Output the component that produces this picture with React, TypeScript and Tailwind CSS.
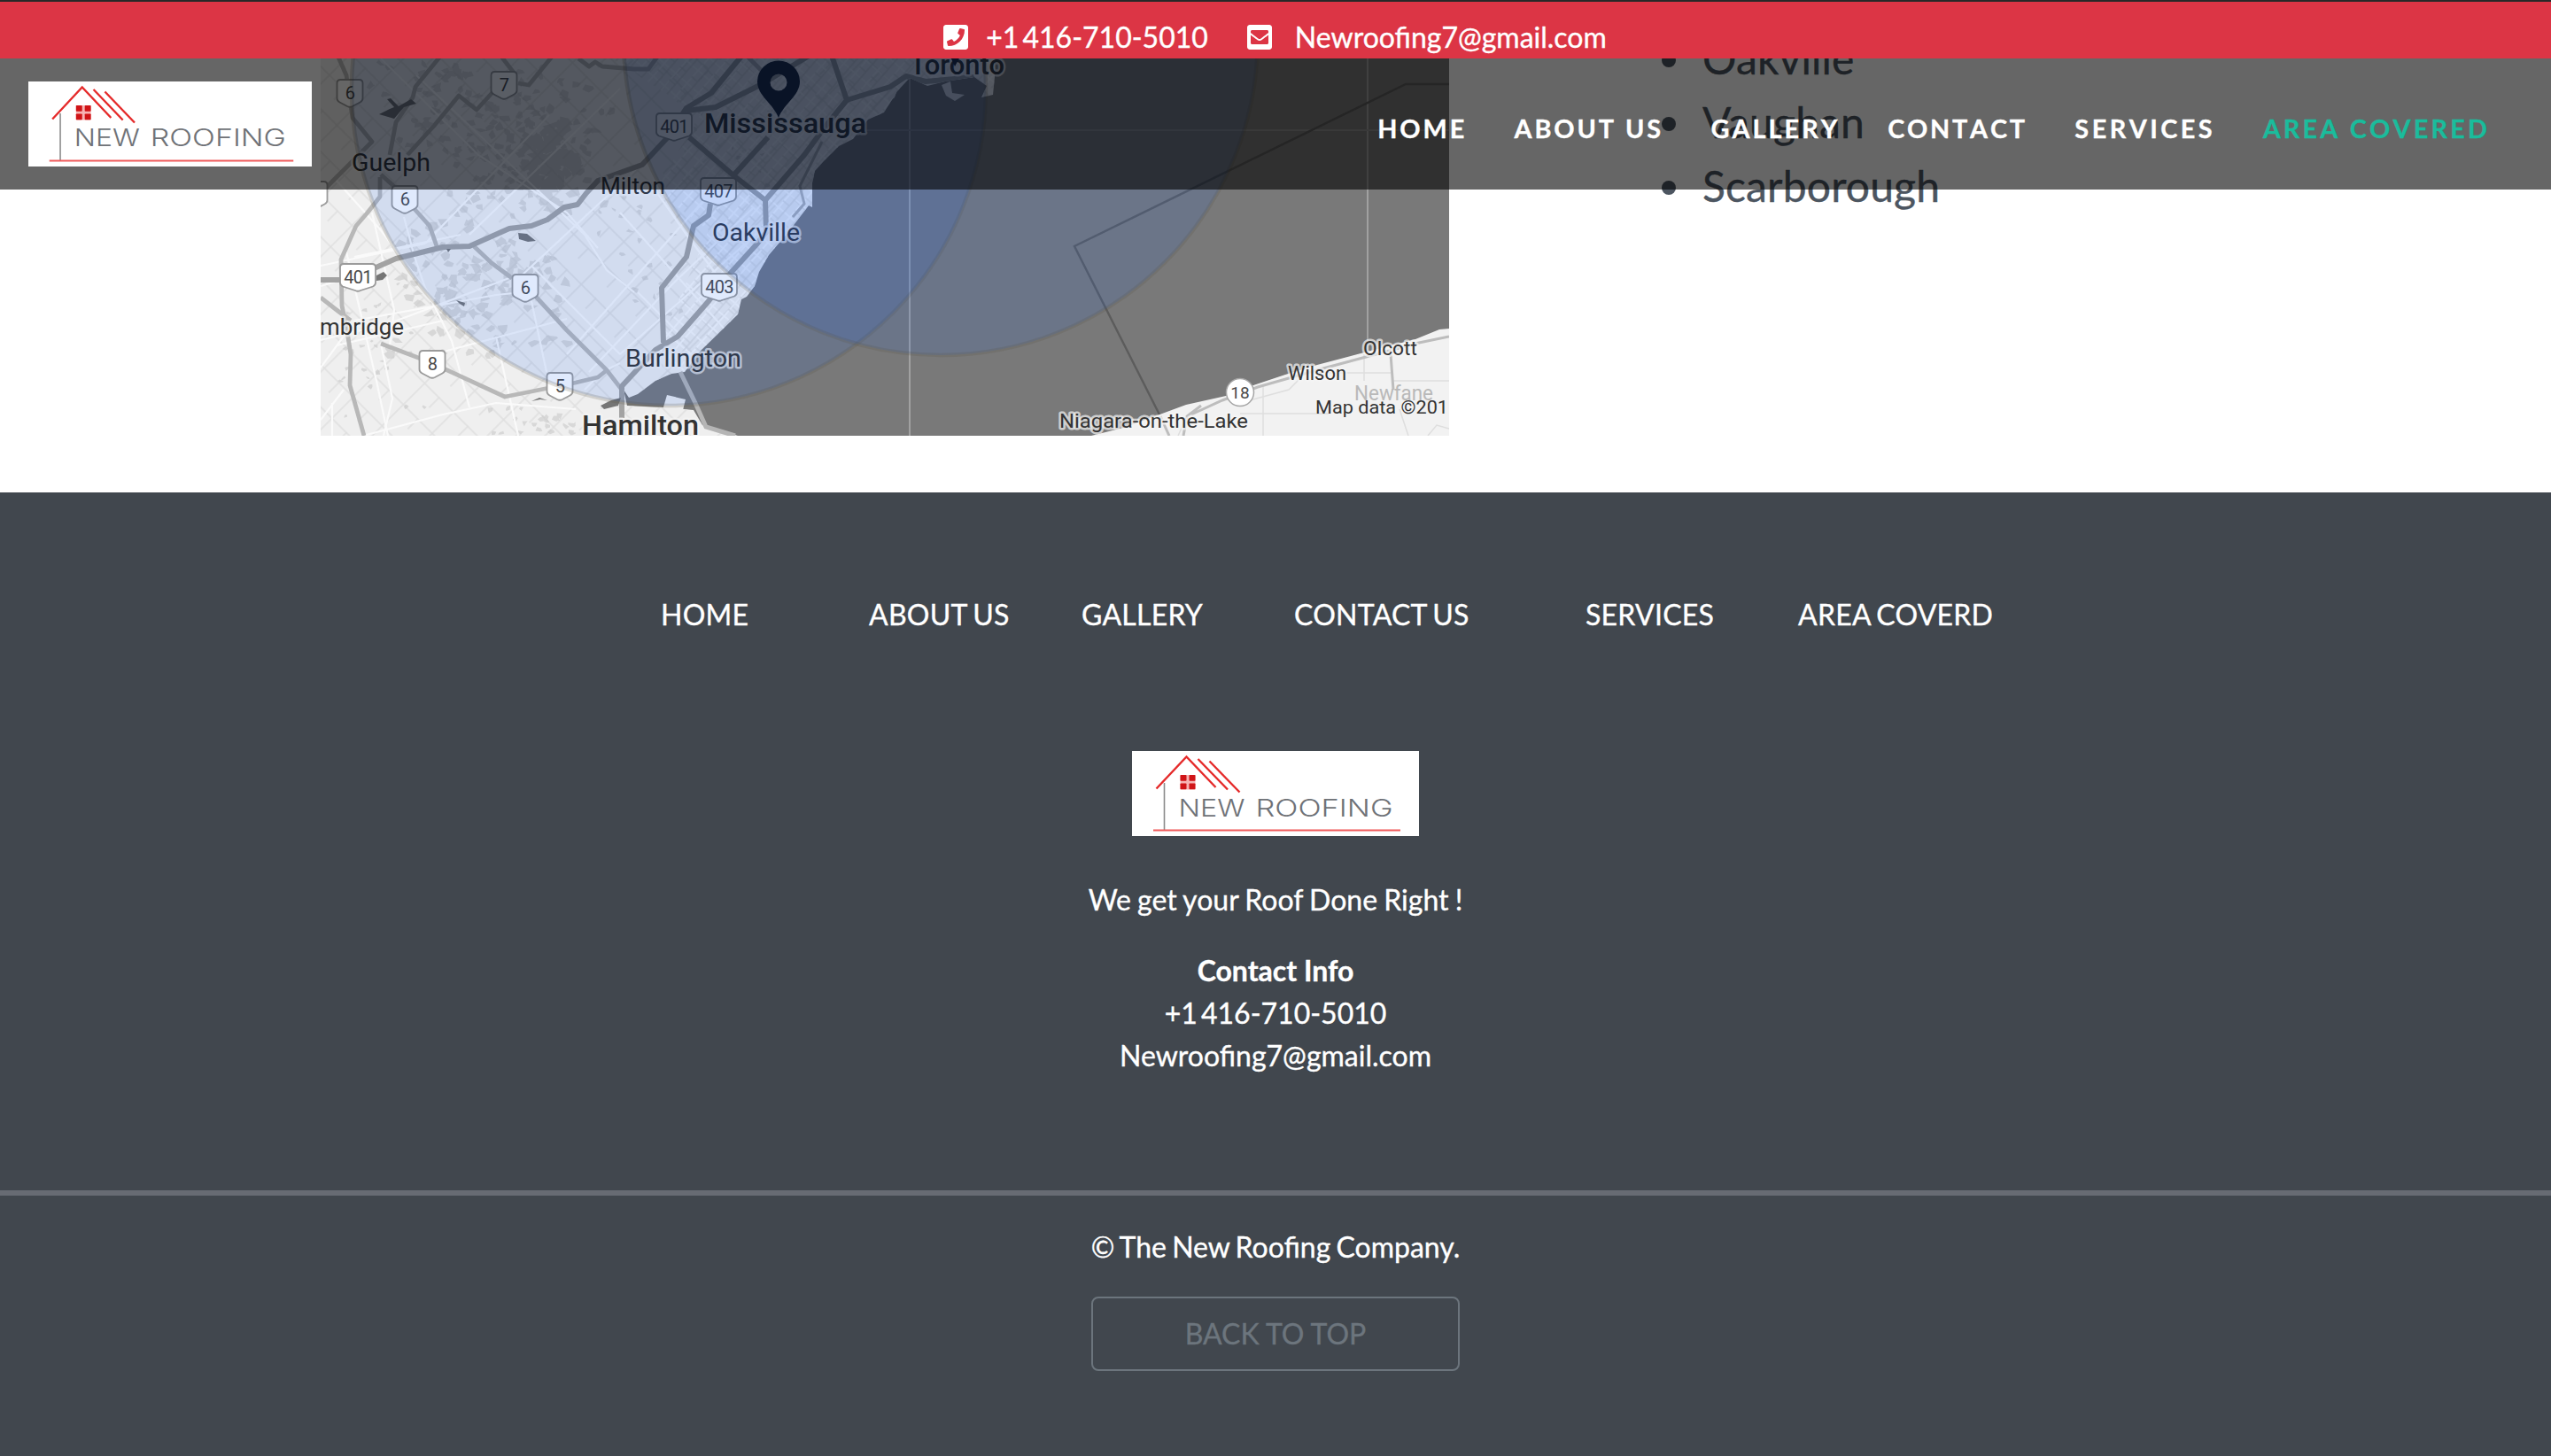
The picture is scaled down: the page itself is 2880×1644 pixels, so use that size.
import { FaEnvelopeSquare, FaPhoneSquare } from "react-icons/fa";

function Logo({ className }: { className: string }) {
  return (
    <svg viewBox="0 0 324 96" preserveAspectRatio="none" className={className}>
      <rect width="324" height="96" fill="#fff" />
      <path d="M36.500 36V89" stroke="#8b8b8b" strokeWidth="1.600" />
      <g fill="none" stroke="#e52a2a" strokeWidth="2.400">
        <path d="M27.500 42.500L61.500 6.500L94.500 41" />
        <path d="M74.500 9L108 43.500" />
        <path d="M87.500 11.500L121.500 46.500" />
      </g>
      <rect x="54.500" y="27" width="17" height="16.500" fill="#f7b3b3" />
      <g fill="#d01417">
        <rect x="54.500" y="27" width="7" height="6.800" rx="0.800" />
        <rect x="64.500" y="27" width="7" height="6.800" rx="0.800" />
        <rect x="54.500" y="36.500" width="7" height="6.800" rx="0.800" />
        <rect x="64.500" y="36.500" width="7" height="6.800" rx="0.800" />
      </g>
      <path d="M24 89.500H303" stroke="#f05a5a" strokeWidth="2.200" />
      <g fill="#6f7277" fontFamily="Inter, sans-serif" fontSize="27" fontWeight="300">
        <text x="52.500" y="73.500" textLength="75" lengthAdjust="spacingAndGlyphs">NEW</text>
        <text x="139.500" y="73.500" textLength="155" lengthAdjust="spacingAndGlyphs">ROOFING</text>
      </g>
    </svg>
  );
}

const COAST =
  "M362 0H1123V87L1121 107L1108 110L1114 97L1100 87L1067 92L1047 97L1027 88L1013 103L998 127L980 135L963 157L947 165L930 182L920 193L917 207V234L913 232L890 262L868 288L857 307L852 323L843 335L837 338L833 355L790 397L773 420L758 422L740 430L720 445L710 449L704 440L708 458L750 460L783 463L793 480L833 492H362Z";
const NIAGARA =
  "M1232 492L1268 483L1312 467L1339 457L1384 447L1415 435L1451 423L1487 412L1540 398L1598 383L1625 372L1636 371V492Z";

const HIGHWAYS = [
  "M362 316H384M420 304L447 292L500 279L530 278L575 258L600 255L618 248L637 234L652 231L662 218L675 204L700 195L725 186L752 157L775 122L803 105L830 72L840 60",
  "M775 125L808 121L860 95L915 62",
  "M778 155L828 198L864 226L865 262L855 275L825 308L800 340L765 380L740 395L702 436V472",
  "M938 60L956 113L930 145L908 175L864 226M867 155L828 198",
  "M956 113L1005 98L1023 86L1045 92L1100 87",
  "M802 230L800 243L783 255L775 290L747 325L749 387",
];
const MAJOR_ROADS = [
  "M467 235L485 255L493 278M535 278L555 297L578 314",
  "M605 335L640 373L685 418L702 440",
  "M430 388L475 405L505 418L570 448L620 438L650 432L675 426L685 418",
  "M429 200V222L415 240L402 255L385 293L386 345L392 375L396 400L395 435L411 492",
  "M362 336L380 350L396 362",
  "M380 60L391 85L398 133L420 160L402 178L366 214M430 197L450 215",
  "M500 60L469 98L466 110L447 138L440 175",
  "M460 175L490 142L518 108L538 124L560 100M585 94L597 96L628 58",
  "M563 60L580 82M653 66L665 75L672 70L680 75L716 78L732 78L745 60M842 62L868 88",
];
const MINOR_ROADS = [
  "M380 204L430 260L490 340M362 300L480 275M400 290L520 265M362 323L400 312",
  "M456 245L468 290L480 325L510 385L530 460M390 280L425 430L438 492",
  "M362 384L440 365L580 312M400 362L560 333L590 330M380 390L500 362",
  "M420 240L445 350L440 390M560 380L585 492M600 340L617 420",
  "M362 415L395 370M375 455V492M362 474L388 440M430 388L443 450L433 492",
  "M410 492L500 468L560 455L650 462M490 400L640 360",
  "M470 85L660 265L685 305L716 330M430 66L540 175L640 240L675 280",
  "M530 265L700 100M590 310L730 180M480 275L620 130M640 400L800 220",
  "M700 400L870 250M665 420L760 320L850 235M600 300L700 400M700 240L830 385",
  "M740 215L775 265L820 325M720 330L770 380M660 440L680 420L700 410",
];

const LAKES = [
  "M428 129L440 123L445 121L437 112L441 111L450 120L464 112L470 117L456 121L445 134Z",
  "M585 263L595 264L605 272L596 273L586 270Z",
  "M425 311L433 307L437 311L432 316L425 317Z",
  "M515 339L525 342L524 346L519 343Z",
  "M504 281L509 281L506 285Z",
  "M678 458L690 452L701 449L698 458L682 462Z",
  "M600 453L609 449L618 452L610 451Z",
];

type Patch = { points: string };

function makePatches(): Patch[] {
  let seed = 4711;
  const next = () => {
    seed = (seed * 16807) % 2147483647;
    return seed / 2147483647;
  };
  const zones = [
    { x: 585, y: 165, w: 110, h: 100, n: 170, s: 7 },
    { x: 625, y: 190, w: 34, h: 60, n: 50, s: 13 },
    { x: 540, y: 330, w: 120, h: 90, n: 140, s: 8 },
    { x: 480, y: 110, w: 100, h: 80, n: 40, s: 7 },
    { x: 420, y: 400, w: 70, h: 90, n: 30, s: 4 },
    { x: 720, y: 290, w: 60, h: 90, n: 24, s: 5 },
    { x: 850, y: 150, w: 80, h: 90, n: 20, s: 4 },
    { x: 620, y: 475, w: 80, h: 20, n: 24, s: 5 },
  ];
  return zones.flatMap((zone) =>
    Array.from({ length: zone.n }, () => {
      const cx = zone.x + (next() + next() - 1) * zone.w;
      const cy = zone.y + (next() + next() - 1) * zone.h;
      const corners = Array.from({ length: 5 }, (_, i) => {
        const angle = (i / 5) * Math.PI * 2 + next();
        const radius = zone.s * (0.3 + next() * 0.8);
        return `${(cx + Math.cos(angle) * radius).toFixed(1)},${(cy + Math.sin(angle) * radius * 0.8).toFixed(1)}`;
      });
      return { points: corners.join(" ") };
    }),
  );
}

const PATCHES = makePatches();

const SHIELDS = [
  { x: 395, y: 105, t: "6" },
  { x: 569, y: 96, t: "7" },
  { x: 457, y: 225, t: "6" },
  { x: 404, y: 313, t: "401" },
  { x: 593, y: 325, t: "6" },
  { x: 488, y: 411, t: "8" },
  { x: 632, y: 436, t: "5" },
  { x: 761, y: 143, t: "401" },
  { x: 811, y: 216, t: "407" },
  { x: 812, y: 324, t: "403" },
  { x: 355, y: 220, t: "" },
];

const LABELS = [
  { t: "Guelph", x: 397, y: 193, w: 89, s: 28, b: 400 },
  { t: "Milton", x: 678, y: 219, w: 73, s: 25.5, b: 400 },
  { t: "Mississauga", x: 795, y: 150, w: 183, s: 32, b: 500 },
  { t: "Oakville", x: 804, y: 272, w: 99, s: 28, b: 400 },
  { t: "Burlington", x: 706, y: 414, w: 131, s: 28, b: 400 },
  { t: "Hamilton", x: 657, y: 491, w: 132, s: 32, b: 500 },
  { t: "mbridge", x: 361, y: 378, w: 95, s: 26.5, b: 400 },
  { t: "Toronto", x: 1027, y: 84, w: 107, s: 32, b: 500 },
  { t: "Olcott", x: 1539, y: 401, w: 61, s: 22.5, b: 400 },
  { t: "Wilson", x: 1454, y: 429, w: 66, s: 22.5, b: 400 },
  { t: "Niagara-on-the-Lake", x: 1196, y: 483, w: 213, s: 22.5, b: 400 },
];

function ServiceMap() {
  return (
    <svg viewBox="362 66 1274 426" className="mt-9 h-[426px] w-[1274px] shrink-0">
      <defs>
        <clipPath id="land">
          <path d={COAST} />
        </clipPath>
        <clipPath id="urban">
          <path d="M690 66H1123V100L1027 88L998 127L920 193L917 234L857 307L833 355L773 420L740 400L770 330L800 260L740 215L790 130Z" />
        </clipPath>
        <pattern id="rural" width="46" height="34" patternUnits="userSpaceOnUse" patternTransform="rotate(45)">
          <path d="M0 1H46M1 0V34M24 0V17" stroke="#e0e0e0" strokeWidth="1.500" fill="none" />
        </pattern>
        <pattern id="streets" width="19" height="17" patternUnits="userSpaceOnUse" patternTransform="rotate(-49)">
          <path d="M0 1H19M1 0V17" stroke="#fff" strokeWidth="1.800" fill="none" />
          <path d="M0 9H19M10 0V9" stroke="#d6d6d6" strokeWidth="1.300" fill="none" />
        </pattern>
      </defs>
      <rect x="362" y="66" width="1274" height="426" fill="#797979" />
      <g stroke="#a6a6a6" strokeWidth="1.800">
        <path d="M1027 66V492M1544 66V492" />
        <path d="M900 147H1636" stroke="#8e8e8e" />
      </g>
      <path d="M1636 95H1587L1213 278L1316 482" fill="none" stroke="#5c5c5c" strokeWidth="2.400" />

      <path d={COAST} fill="#efefef" />
      <path d="M1063 96L1073 92L1075 105L1089 107L1078 114L1068 108Z M1002 111L1013 101L1010 110L1004 115Z" fill="#e6e6e6" />
      <path d="M753 446L774 451L771 463H748Z" fill="#efefef" />
      <g clipPath="url(#land)">
        <rect x="362" y="66" width="780" height="426" fill="url(#rural)" />
        <g fill="#cbcbcb" opacity="0.650">
          {PATCHES.map((patch, i) => (
            <polygon key={i} points={patch.points} />
          ))}
        </g>
        <g clipPath="url(#urban)" opacity="0.700">
          <rect x="680" y="66" width="450" height="370" fill="url(#streets)" />
        </g>
        <g fill="none" stroke="#fafafa" strokeWidth="2.200">
          {MINOR_ROADS.map((d) => (
            <path key={d} d={d} />
          ))}
        </g>
        <g fill="none" stroke="#b8b8b8" strokeWidth="4.800" strokeLinejoin="round">
          {MAJOR_ROADS.map((d) => (
            <path key={d} d={d} />
          ))}
        </g>
        <g fill="none" stroke="#a3a3a3" strokeWidth="6" strokeLinejoin="round">
          {HIGHWAYS.map((d) => (
            <path key={d} d={d} />
          ))}
        </g>
        <path d="M928 160L903 210L908 230L895 245" fill="none" stroke="#b2b2b2" strokeWidth="3" />
        <g fill="#757575">
          {LAKES.map((d) => (
            <path key={d} d={d} />
          ))}
        </g>
      </g>
      <path d="M768 420L785 455L797 482L830 492" fill="none" stroke="#b5b5b5" strokeWidth="5" />

      <path d={NIAGARA} fill="#f2f2f2" />
      <g fill="none" stroke="#dedede" strokeWidth="1.500">
        <path d="M1426 435V492M1480 421H1570M1636 430H1572M1470 425L1455 440L1400 455M1400 467H1500M1340 470L1330 492M1540 400V430M1580 462L1590 492M1612 492L1622 480L1636 484" />
      </g>
      <g fill="none" stroke="#bdbdbd" strokeWidth="3">
        <path d="M1636 380L1602 387L1490 417L1420 437L1380 452L1345 468M1570 400L1573 440M1310 470L1320 492M1356 458L1340 470L1336 492" />
      </g>

      {SHIELDS.map(({ x, y, t }) => {
        const half = t.length > 1 ? 20 : 14.5;
        return (
          <g key={`${x}-${y}`} transform={`translate(${x} ${y})`}>
            <path
              d={`M${-half + 4} -15H${half - 4}Q${half} -15 ${half} -11V6Q${half} 9 ${half - 3} 10.500L3 15Q0 16.500 -3 15L${-half + 3} 10.500Q${-half} 9 ${-half} 6V-11Q${-half} -15 ${-half + 4} -15Z`}
              fill="#fff"
              stroke="#9b9b9b"
              strokeWidth="1.800"
            />
            <text y="7" textAnchor="middle" fontFamily="Roboto, sans-serif" fontSize="20" letterSpacing="-0.700" fill="#4a4a4a">
              {t}
            </text>
          </g>
        );
      })}
      <circle cx="1400" cy="443" r="15.500" fill="#fff" stroke="#a5a5a5" strokeWidth="1.500" />
      <text x="1400" y="450" textAnchor="middle" fontFamily="Roboto, sans-serif" fontSize="19" fill="#4a4a4a">
        18
      </text>

      <text x="1529" y="452" textLength="89" lengthAdjust="spacingAndGlyphs" fontFamily="Roboto, sans-serif" fontSize="23" fill="#b9b9b9">
        Newfane
      </text>
      <g fontFamily="Roboto, sans-serif" fill="#333" stroke="#f5f5f5" strokeOpacity="0.700" strokeWidth="5" strokeLinejoin="round" paintOrder="stroke">
        {LABELS.map(({ t, x, y, w, s, b }) => (
          <text key={t} x={x} y={y} textLength={w} lengthAdjust="spacingAndGlyphs" fontSize={s} fontWeight={b}>
            {t}
          </text>
        ))}
      </g>
      <text x="1485" y="467" textLength="150" lengthAdjust="spacingAndGlyphs" fontFamily="Roboto, sans-serif" fontSize="20.500" fill="#333">
        Map data ©201
      </text>

      <path
        fillRule="evenodd"
        fill="#1b2333"
        d="M879 133C873 117 855 108 855 92A24 23.500 0 0 1 903 92C903 108 885 117 879 133ZM879 83.500A9.500 9.500 0 1 0 879 102.500A9.500 9.500 0 1 0 879 83.500Z"
      />
      <path fill="#1b2333" d="M1071 60H1086L1078 75Z" />
      <g fill="#0c5af0" fillOpacity="0.130" stroke="#5c5344" strokeOpacity="0.200" strokeWidth="4.500">
        <circle cx="755" cy="100" r="358" />
        <circle cx="1062" cy="43" r="358" />
      </g>
    </svg>
  );
}

const NAV = [
  { label: "HOME", className: "" },
  { label: "ABOUT US", className: "" },
  { label: "GALLERY", className: "tracking-[3.1px]" },
  { label: "CONTACT", className: "tracking-[2.8px]" },
  { label: "SERVICES", className: "tracking-[3.5px]" },
  { label: "AREA COVERED", className: "tracking-[3.2px] text-[#1abc9c]" },
];
const FOOTER_NAV = ["HOME", "ABOUT US", "GALLERY", "CONTACT US", "SERVICES", "AREA COVERD"];

function Header() {
  return (
    <header className="absolute inset-x-0 top-0 z-10">
      <div className="flex h-[66px] items-center justify-center border-t-2 border-[#282828] bg-[#dc3545] pr-[3px] pt-4 text-white">
        <FaPhoneSquare className="size-8" />
        <span className="ml-[18px] [word-spacing:-4px]">+1 416-710-5010</span>
        <FaEnvelopeSquare className="ml-[42px] size-8" />
        <span className="ml-6">Newroofing7@gmail.com</span>
      </div>
      <div className="flex h-[148px] items-center justify-between bg-black/60 pl-8 pr-[69px]">
        <Logo className="h-24 w-80" />
        <nav className="flex gap-[53.500px] pt-[10px] text-[28.8px] font-bold tracking-[2.9px] text-white [font-kerning:none]">
          {NAV.map(({ label, className }) => (
            <a key={label} className={className}>
              {label}
            </a>
          ))}
        </nav>
      </div>
    </header>
  );
}

export default function App() {
  return (
    <div className="relative flex h-[1644px] w-[2880px] flex-col overflow-hidden bg-white font-['Lato',sans-serif] text-[32px] leading-[48px] [-webkit-text-stroke-width:0.35px]">
      <Header />
      <main className="flex h-[556px] items-start pl-[362px] pt-[30px] [-webkit-text-stroke-width:0]">
        <ServiceMap />
        <ul className="ml-[240px] text-[48px] leading-[72px] tracking-[0.15px] text-[#4d5661] [-webkit-text-stroke-width:0.35px]">
          {["Oakville", "Vaughan", "Scarborough"].map((city) => (
            <li key={city} className="flex items-center">
              <span className="mr-[30px] mt-1 size-4 rounded-full bg-[#4d5661]" />
              {city}
            </li>
          ))}
        </ul>
      </main>
      <footer className="flex grow flex-col items-center bg-[#41474e] pt-[114px] text-center text-white">
        <nav className="grid w-full grid-cols-[235px_240px_240px_329px_240px_300px] pl-[746px] text-left tracking-[0.25px] [word-spacing:-2px]">
          {FOOTER_NAV.map((item) => (
            <a key={item}>{item}</a>
          ))}
        </nav>
        <Logo className="mt-[130px] h-24 w-[324px]" />
        <p className="mt-12 [word-spacing:-1px]">We get your Roof Done Right !</p>
        <p className="mt-8 font-bold">Contact Info</p>
        <p className="[word-spacing:-4px]">+1 416-710-5010</p>
        <p>Newroofing7@gmail.com</p>
        <div className="mt-32 h-1.5 w-full shrink-0 bg-[#676b73]" />
        <p className="mt-[34px] [word-spacing:-2px]">© The New Roofing Company.</p>
        <button className="mt-8 h-[84px] w-[416px] rounded-lg border-2 border-[#6c757d] text-[#6c757d]">BACK TO TOP</button>
      </footer>
    </div>
  );
}
